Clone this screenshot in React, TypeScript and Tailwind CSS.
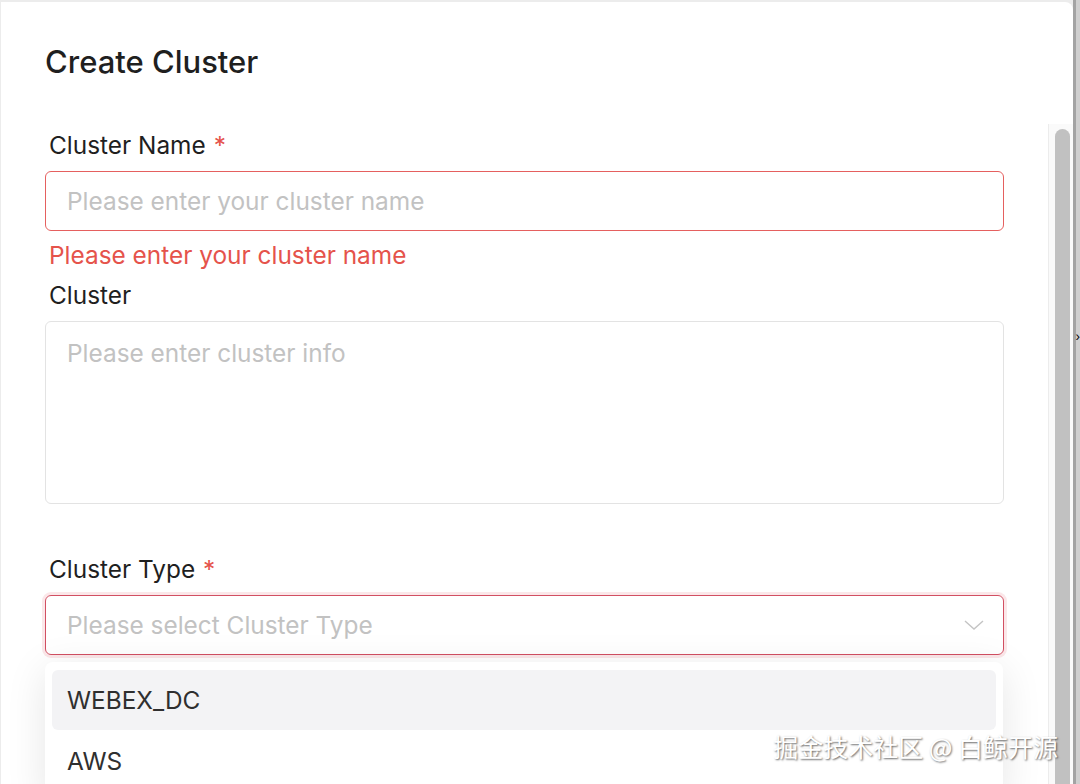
import React from "react";

const Label = ({ text, required }: { text: string; required?: boolean }) => (
  <div className="flex items-center h-[32px] pl-[4px] text-[24.4px] text-[#1f1f1f]">
    <span>{text}</span>
    {required && <span className="ml-[8px] text-[#e5534b]">*</span>}
  </div>
);

const App = () => {
  return (
    <div className="w-[1080px] h-[784px] overflow-hidden flex bg-[#ececec] font-['Inter','Noto_Sans_CJK_SC',sans-serif] relative">
      <div className="w-[1073px] mt-[2px] ml-[1px] bg-white rounded-tr-[8px] flex flex-col overflow-hidden">
        <div className="h-[122px] shrink-0 pt-[40px] pl-[44px]">
          <h1 className="text-[31px] leading-[40px] font-medium text-[#1f1f1f]">Create Cluster</h1>
        </div>

        <div className="flex flex-1 min-h-0">
          <div className="w-[1003px] pl-[44px] pt-[5px] flex flex-col">
            <Label text="Cluster Name" required />
            <input
              className="mt-[10px] h-[60px] w-full rounded-[6px] border border-[#e5605f] px-[21px] text-[24.4px] outline-none placeholder:text-[#c2c2c2]"
              placeholder="Please enter your cluster name"
            />
            <div className="mt-[8px] h-[32px] flex items-center pl-[4px] text-[24.4px] text-[#e5534b]">
              Please enter your cluster name
            </div>

            <div className="mt-[8px]">
              <Label text="Cluster" />
            </div>
            <textarea
              className="mt-[10px] h-[183px] w-full resize-none rounded-[6px] border border-[#e3e3e3] px-[21px] py-[15px] text-[24.4px] leading-[32px] outline-none placeholder:text-[#c2c2c2]"
              placeholder="Please enter cluster info"
            />

            <div className="mt-[49px]">
              <Label text="Cluster Type" required />
            </div>
            <div className="relative mt-[10px]">
              <div className="h-[60px] w-full rounded-[6px] border border-[#d24f62] shadow-[0_0_0_3px_rgba(229,83,100,0.14)] pl-[21px] pr-[19px] flex items-center justify-between">
                <span className="text-[24.4px] text-[#c2c2c2]">Please select Cluster Type</span>
                <svg width="20" height="10" viewBox="0 0 20 10">
                  <polyline points="1,1 10,9 19,1" fill="none" stroke="#c4c4c4" strokeWidth="1.4" />
                </svg>
              </div>

              <div className="absolute left-0 top-[67px] w-[958px] bg-white rounded-[8px] px-[7px] py-[8px] shadow-[0_8px_40px_rgba(0,0,0,0.10)] flex flex-col gap-[1px]">
                <div className="h-[60px] rounded-[6px] bg-[#f3f3f5] flex items-center pl-[15px] text-[24.4px] text-[#2f2f2f]">
                  WEBEX_DC
                </div>
                <div className="h-[60px] rounded-[6px] flex items-center pl-[15px] text-[24.4px] text-[#2f2f2f]">
                  AWS
                </div>
              </div>
            </div>
          </div>

          <div className="flex-1" />

          <div className="w-[25px] shrink-0 border-l border-[#ececec] bg-[#fafafa] pt-[5px]">
            <div className="ml-[6px] w-[15px] h-full rounded-t-full bg-[#c1c1c1]" />
          </div>
        </div>
      </div>

      <div className="flex-1 flex">
        <div className="w-[3px] bg-[#a3a3a3]" />
        <div className="flex-1 bg-[#cfcfcf] flex flex-col">
          <div className="h-[330px]" />
          <span className="text-[12px] leading-[14px] text-black -ml-[1px]">›</span>
        </div>
      </div>

      <div className="absolute right-[22px] top-[729px] text-[25px] leading-[34px] text-white [text-shadow:1px_1px_2px_rgba(0,0,0,0.6)] font-['Noto_Sans_CJK_SC',sans-serif]">
        掘金技术社区 @ 白鲸开源
      </div>
    </div>
  );
};

export default App;
